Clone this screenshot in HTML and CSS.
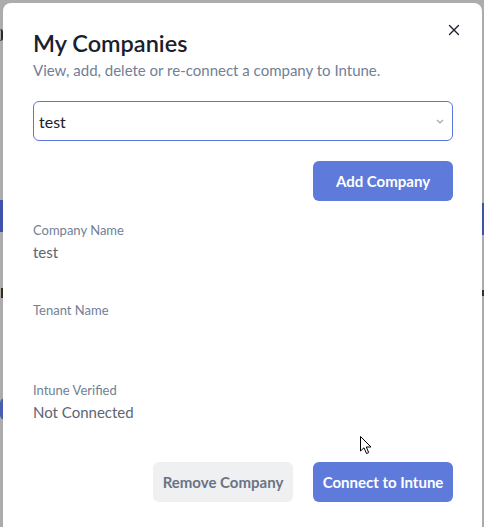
FILE: index.html
```html
<!DOCTYPE html>
<html lang="en">
<head>
<meta charset="utf-8">
<title>My Companies</title>
<link rel="stylesheet" href="styles.css">
</head>
<body>
<div class="backdrop">
  <span class="bg-s"></span>
  <span class="bg-bar bg-bar-left"></span>
  <span class="bg-mark"></span>
  <span class="bg-round"></span>
  <span class="bg-bar bg-bar-right"></span>
  <span class="bg-mark-right"></span>
</div>
<div class="modal">
  <button class="close" aria-label="Close">
    <svg width="24" height="24" viewBox="0 0 24 24"><path d="M7.5 7.5 L16.5 16.5 M16.5 7.5 L7.5 16.5" stroke="#1a202c" stroke-width="1.4" fill="none" stroke-linecap="round"/></svg>
  </button>
  <h2 class="title">My Companies</h2>
  <p class="subtitle">View, add, delete or re-connect a company to Intune.</p>
  <div class="select">
    <span class="select-text">test</span>
    <svg class="chevron" width="8" height="5" viewBox="0 0 8 5"><path d="M1 1 L4 4 L7 1" stroke="#a0a4ab" stroke-width="1.1" fill="none"/></svg>
  </div>
  <div class="actions">
    <button class="btn primary">Add Company</button>
  </div>
  <div class="field">
    <div class="label">Company Name</div>
    <div class="value">test</div>
  </div>
  <div class="field">
    <div class="label">Tenant Name</div>
    <div class="value"></div>
  </div>
  <div class="field">
    <div class="label">Intune Verified</div>
    <div class="value">Not Connected</div>
  </div>
  <div class="footer">
    <button class="btn secondary">Remove Company</button>
    <button class="btn primary">Connect to Intune</button>
  </div>
</div>
<svg class="cursor" width="14" height="20" viewBox="0 0 14 20"><path d="M0.5 0.5 L0.5 15 L4 11.8 L6.5 17.5 L8.7 16.6 L6.3 11 L11 11 Z" fill="#fff" stroke="#000" stroke-width="1"/></svg>
</body>
</html>
```
FILE: styles.css
```css
html, body {
  margin: 0;
  padding: 0;
}
body {
  width: 484px;
  height: 527px;
  overflow: hidden;
  background: #acacac;
  font-family: Lato, "Noto Sans", "Liberation Sans", sans-serif;
  position: relative;
}
.backdrop {
  position: absolute;
  inset: 0;
}
.bg-s {
  position: absolute;
  left: 0;
  top: 29px;
  width: 3px;
  height: 12px;
  border-radius: 0 3px 3px 0;
  border-right: 2px solid #2a2a2a;
  box-sizing: border-box;
}
.bg-bar {
  position: absolute;
  width: 4px;
  height: 32px;
  background: #3d52a8;
}
.bg-bar-left { left: 0; top: 200px; }
.bg-bar-right { left: 481px; top: 203px; }
.bg-mark {
  position: absolute;
  left: 1px;
  top: 288px;
  width: 3px;
  height: 10px;
  background: #3a2a1a;
}
.bg-mark-right {
  position: absolute;
  left: 482px;
  top: 290px;
  width: 2px;
  height: 6px;
  background: #333;
}
.bg-round {
  position: absolute;
  left: 0;
  top: 398px;
  width: 10px;
  height: 22px;
  border-radius: 6px;
  background: #4a5eb0;
}
.modal {
  position: relative;
  box-sizing: border-box;
  margin: 3px 0 0 3px;
  width: 479px;
  min-height: 540px;
  padding: 26px 29px 0 30px;
  background: #ffffff;
  border-radius: 8px;
}
.close {
  position: absolute;
  top: 15px;
  right: 16px;
  width: 24px;
  height: 24px;
  padding: 0;
  border: 0;
  background: transparent;
  display: flex;
}
.title {
  margin: 0;
  font-size: 23.5px;
  line-height: 29px;
  font-weight: 600;
  color: #1a202c;
}
.subtitle {
  margin: 0;
  font-size: 15px;
  line-height: 24px;
  color: #718096;
}
.select {
  box-sizing: border-box;
  margin-top: 19px;
  height: 40px;
  border: 1px solid #5b77d9;
  border-radius: 6px;
  display: flex;
  align-items: center;
  justify-content: space-between;
  padding: 0 8px 0 5px;
}
.select-text {
  font-size: 16px;
  color: #1a202c;
}
.chevron {
  display: block;
}
.actions {
  margin-top: 20px;
  display: flex;
  justify-content: flex-end;
}
.btn {
  box-sizing: border-box;
  width: 140px;
  height: 40px;
  border: 0;
  border-radius: 6px;
  font-family: inherit;
  font-size: 15px;
  font-weight: 700;
  padding: 0;
  display: flex;
  align-items: center;
  justify-content: center;
}
.primary {
  background: #5e7bdb;
  color: #ffffff;
}
.secondary {
  background: #eff0f2;
  color: #6b7383;
}
.field {
  margin-bottom: 35px;
}
.actions + .field {
  margin-top: 18px;
}
.label {
  font-size: 13px;
  line-height: 21px;
  padding-top: 1px;
  color: #718096;
}
.value {
  font-size: 15px;
  line-height: 24px;
  min-height: 24px;
  margin-top: -1px;
  color: #5d6573;
}
.footer {
  margin-top: 38px;
  display: flex;
  justify-content: flex-end;
  gap: 20px;
}
.field:last-of-type {
  margin-bottom: 0;
}
.cursor {
  position: absolute;
  left: 360px;
  top: 436px;
}
```
